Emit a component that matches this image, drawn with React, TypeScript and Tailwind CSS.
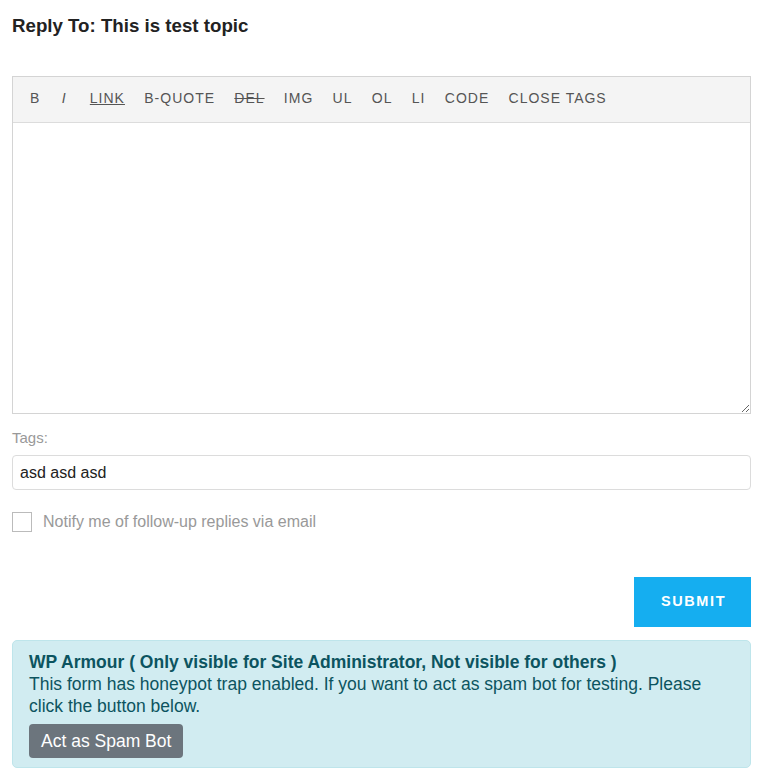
import React from "react";

const tools = [
  { label: "B", cls: "" },
  { label: "I", cls: "italic ml-[2px]" },
  { label: "LINK", cls: "underline ml-[4px]" },
  { label: "B-QUOTE", cls: "" },
  { label: "DEL", cls: "line-through" },
  { label: "IMG", cls: "" },
  { label: "UL", cls: "" },
  { label: "OL", cls: "" },
  { label: "LI", cls: "" },
  { label: "CODE", cls: "" },
  { label: "CLOSE TAGS", cls: "" },
];

export default function App() {
  return (
    <div className="w-[760px] min-h-[778px] bg-white px-3 pt-[15px] font-['Liberation_Sans',Arial,sans-serif]">
      {/* ── Title ── */}
      <h3 className="text-[18.7px] font-bold leading-[22px] text-[#222]">Reply To: This is test topic</h3>

      {/* ── Editor ── */}
      <div className="mt-[39px] w-[739px] border border-[#d4d4d4]">
        <div className="flex h-[46px] items-center gap-[19.3px] border-b border-[#dcdcdc] bg-[#f4f4f4] pb-[3px] pl-[17px]">
          {tools.map((t) => (
            <span
              key={t.label}
              className={["text-[14px] leading-[16px] tracking-[1px] text-[#555]", t.cls].join(" ")}
            >
              {t.label}
            </span>
          ))}
        </div>
        <textarea className="block h-[290px] w-full resize-y bg-white outline-none" />
      </div>

      {/* ── Tags ── */}
      <p className="mt-[15px] text-[15px] leading-[18px] text-[#999]">Tags:</p>
      <div className="mt-[8px] flex h-[35px] w-[739px] items-center rounded-[4px] border border-[#dcdcdc] px-[7px] text-[16px] text-[#222]">
        asd asd asd
      </div>

      {/* ── Notify ── */}
      <div className="mt-[20px] flex items-center gap-[11px]">
        <span className="h-[20px] w-[20px] border border-[#bbb] bg-white" />
        <span className="text-[16px] text-[#999]">Notify me of follow-up replies via email</span>
      </div>

      {/* ── Submit ── */}
      <div className="mt-[43px] flex w-[739px] justify-end">
        <button className="h-[50px] w-[117px] bg-[#15aef0] pl-[2px] text-[14.5px] font-bold tracking-[1.6px] text-white">
          SUBMIT
        </button>
      </div>

      {/* ── WP Armour notice ── */}
      <div className="mt-[13px] w-[739px] rounded-[5px] border border-[#bee5eb] bg-[#d1ecf1] px-4 pb-[9px] pt-[10px] text-[17.5px] leading-[22px] text-[#0c5460]">
        <p className="font-bold">WP Armour ( Only visible for Site Administrator, Not visible for others )</p>
        <p>This form has honeypot trap enabled. If you want to act as spam bot for testing. Please click the button below.</p>
        <button className="mt-[7px] h-[34px] rounded-[4px] bg-[#6c757d] px-[12px] text-[17.5px] text-white">
          Act as Spam Bot
        </button>
      </div>
    </div>
  );
}
